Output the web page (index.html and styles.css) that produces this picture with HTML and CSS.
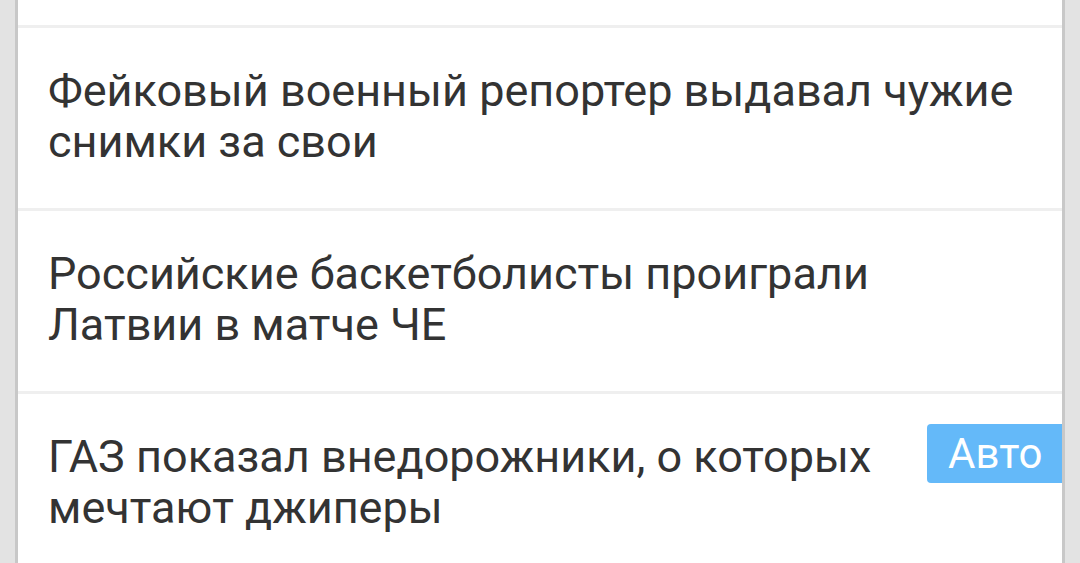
FILE: index.html
```html
<!DOCTYPE html>
<html lang="ru">
<head>
<meta charset="utf-8">
<link rel="stylesheet" href="styles.css">
</head>
<body>
<div class="card">
  <div class="item item-tail"></div>
  <div class="item">
    <div class="title">Фейковый военный репортер выдавал чужие снимки за свои</div>
  </div>
  <div class="item">
    <div class="title">Российские баскетболисты проиграли Латвии в матче ЧЕ</div>
  </div>
  <div class="item">
    <div class="title title-badged">ГАЗ показал внедорожники, о которых мечтают джиперы</div>
    <span class="badge">Авто</span>
  </div>
</div>
</body>
</html>
```
FILE: styles.css
```css
html, body {
  margin: 0;
  padding: 0;
  background: #e3e3e3;
  height: 563px;
  overflow: hidden;
}
.card {
  margin: 0 15px;
  background: #ffffff;
  border-left: 3px solid #c8c8c8;
  border-right: 3px solid #c8c8c8;
  font-family: Roboto, "Noto Sans", sans-serif;
  color: #333333;
}
.item {
  position: relative;
  height: 183px;
  box-sizing: border-box;
  padding: 37px 28px 0 30px;
  border-top: 3px solid #efefef;
}
.item-tail {
  height: 25px;
  border-top: none;
  padding: 0;
}
.title {
  font-size: 45px;
  line-height: 51px;
  max-width: 966px;
}
.title-badged {
  max-width: 840px;
}
.badge {
  position: absolute;
  top: 30px;
  right: 0;
  width: 135px;
  height: 59px;
  box-sizing: border-box;
  padding-left: 21px;
  background: #64b9f9;
  color: #ffffff;
  border-radius: 4px 0 0 4px;
  font-size: 42px;
  line-height: 59px;
}
```
